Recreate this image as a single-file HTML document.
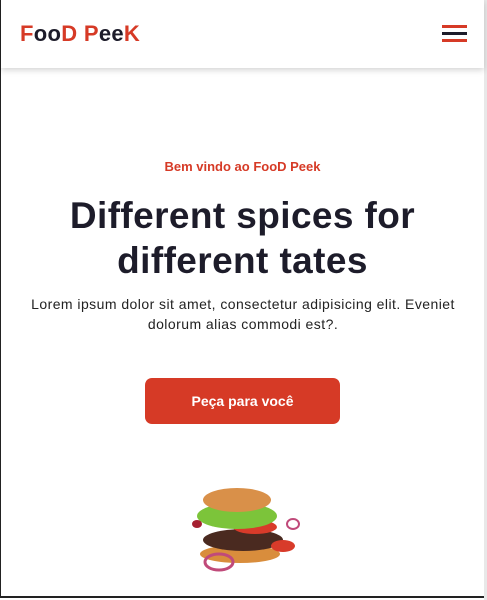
<!DOCTYPE html>
<html><head><style>
html,body{margin:0;padding:0;width:487px;height:600px;overflow:hidden;background:#fff;font-family:"Liberation Sans",sans-serif}
.frame{position:absolute;left:0;top:0;width:485px;height:598px;border-left:1px solid #222;border-bottom:2px solid #222;box-sizing:border-box}
.sb{position:absolute;right:0;top:0;width:3px;height:600px;background:#e8e8e8}
header{position:absolute;left:1px;top:0;width:483px;height:68px;background:#fff;box-shadow:0 2px 6px rgba(0,0,0,.18)}
.logo{position:absolute;left:19px;top:21px;font-weight:bold;font-size:22px;color:#1d1c2a;letter-spacing:.3px}
.r{color:#d63a26}
.hb{position:absolute;left:441px;top:25px;width:25px}
.hb div{height:3px;margin-bottom:4px}
.t1{position:absolute;top:159px;width:485px;text-align:center;color:#d63a26;font-weight:bold;font-size:13px}
h1{position:absolute;top:193px;left:0;width:485px;margin:0;text-align:center;font-size:37px;line-height:45px;color:#1d1c2a;font-weight:bold;letter-spacing:.4px}
p{position:absolute;top:294px;left:22px;width:442px;margin:0;text-align:center;font-size:14px;letter-spacing:.45px;line-height:20px;color:#222}
.btn{position:absolute;left:145px;top:378px;width:195px;height:46px;background:#d63a26;border-radius:7px;color:#fff;font-weight:bold;font-size:14px;text-align:center;line-height:46px}
</style></head><body>
<div class="frame"></div><div class="sb"></div>
<header><div class="logo"><span class="r">F</span>oo<span class="r">D P</span>ee<span class="r">K</span></div>
<div class="hb"><div style="background:#d63a26"></div><div style="background:#1d1c2a"></div><div style="background:#d63a26"></div></div></header>
<div class="t1">Bem vindo ao FooD Peek</div>
<h1>Different spices for<br>different tates</h1>
<p>Lorem ipsum dolor sit amet, consectetur adipisicing elit. Eveniet<br>dolorum alias commodi est?.</p>
<div class="btn">Peça para você</div>
<svg style="position:absolute;left:185px;top:484px" width="115" height="92" viewBox="0 0 115 92">
<ellipse cx="55" cy="70" rx="40" ry="9" fill="#d98d3c"/>
<ellipse cx="58" cy="56" rx="40" ry="11" fill="#4a2a20"/>
<ellipse cx="70" cy="43" rx="22" ry="7" fill="#d83b2a"/>
<ellipse cx="52" cy="32" rx="40" ry="13" fill="#7cc43a"/>
<ellipse cx="52" cy="16" rx="34" ry="12" fill="#d99049"/>
<ellipse cx="98" cy="62" rx="12" ry="6" fill="#d83b2a"/>
<ellipse cx="34" cy="78" rx="14" ry="8" fill="none" stroke="#c04a7a" stroke-width="3"/>
<ellipse cx="108" cy="40" rx="6" ry="5" fill="none" stroke="#c04a7a" stroke-width="2"/>
<ellipse cx="12" cy="40" rx="5" ry="4" fill="#a52030"/>
</svg>
</body></html>
